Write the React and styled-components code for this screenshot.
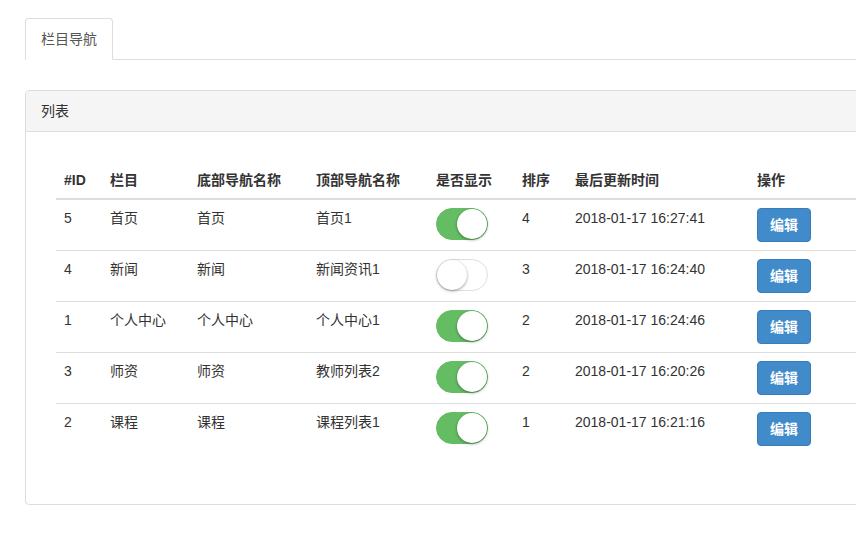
import React from "react";
import styled, { createGlobalStyle } from "styled-components";

const Global = createGlobalStyle`
  html, body { margin: 0; padding: 0; background: #fff; overflow: hidden; }
  body {
    font-family: "Liberation Sans", "Noto Sans CJK SC", sans-serif;
    font-size: 14px;
    line-height: 20px;
    color: #333;
  }
`;

const Page = styled.div`
  width: 960px;
  padding: 18px 0 0 25px;
  box-sizing: border-box;
`;

const Tabs = styled.ul`
  display: flex;
  list-style: none;
  margin: 0;
  padding: 0;
  border-bottom: 1px solid #ddd;
`;

const Tab = styled.li`
  margin-bottom: -1px;
  padding: 10px 15px;
  color: #555;
  background: #fff;
  border: 1px solid ${(p) => (p.$active ? "#ddd" : "transparent")};
  border-bottom-color: transparent;
  border-radius: 4px 4px 0 0;
`;

const Panel = styled.div`
  margin-top: 30px;
  border: 1px solid #ddd;
  border-radius: 4px;
  background: #fff;
`;

const PanelHeading = styled.div`
  padding: 10px 15px;
  background: #f5f5f5;
  border-bottom: 1px solid #ddd;
  border-radius: 3px 3px 0 0;
  color: #333;
`;

const PanelBody = styled.div`
  padding: 15px;
`;

const TableWrap = styled.div`
  padding: 15px;
`;

const Table = styled.table`
  width: 880px;
  table-layout: fixed;
  border-collapse: collapse;
  border-spacing: 0;
  margin-bottom: 20px;
`;

const Th = styled.th`
  text-align: left;
  font-weight: bold;
  padding: 8px;
  vertical-align: bottom;
  border-bottom: 2px solid #ddd;
  white-space: nowrap;
`;

const Tr = styled.tr`
  & + & > td { border-top: 1px solid #ddd; }
`;

const Td = styled.td`
  padding: 8px;
  vertical-align: top;
  white-space: nowrap;
`;

const Switch = styled.span`
  display: inline-block;
  position: relative;
  width: 50px;
  height: 30px;
  border-radius: 20px;
  border: 1px solid ${(p) => (p.$on ? "#64bd63" : "#dfdfdf")};
  background: ${(p) => (p.$on ? "#64bd63" : "#fff")};
  box-shadow: ${(p) => (p.$on ? "inset 0 0 0 16px #64bd63" : "inset 0 0 0 0 #dfdfdf")};
  vertical-align: top;
`;

const Knob = styled.small`
  position: absolute;
  top: 0;
  left: ${(p) => (p.$on ? "20px" : "0")};
  width: 30px;
  height: 30px;
  border-radius: 100%;
  background: #fff;
  box-shadow: 0 1px 3px rgba(0, 0, 0, 0.4);
`;

const Button = styled.button`
  font-family: inherit;
  font-size: 14px;
  line-height: 20px;
  font-weight: bold;
  color: #fff;
  background: #428bca;
  border: 1px solid #357ebd;
  border-radius: 4px;
  padding: 6px 12px;
  cursor: pointer;
`;

const cols = [46, 87, 119, 120, 86, 53, 182, 187];
const headers = ["#ID", "栏目", "底部导航名称", "顶部导航名称", "是否显示", "排序", "最后更新时间", "操作"];

const rows = [
  { id: 5, name: "首页", bottom: "首页", top: "首页1", on: true, sort: 4, time: "2018-01-17 16:27:41" },
  { id: 4, name: "新闻", bottom: "新闻", top: "新闻资讯1", on: false, sort: 3, time: "2018-01-17 16:24:40" },
  { id: 1, name: "个人中心", bottom: "个人中心", top: "个人中心1", on: true, sort: 2, time: "2018-01-17 16:24:46" },
  { id: 3, name: "师资", bottom: "师资", top: "教师列表2", on: true, sort: 2, time: "2018-01-17 16:20:26" },
  { id: 2, name: "课程", bottom: "课程", top: "课程列表1", on: true, sort: 1, time: "2018-01-17 16:21:16" },
];

export default function App() {
  return (
    <>
      <Global />
      <Page>
        <Tabs>
          <Tab $active>栏目导航</Tab>
        </Tabs>
        <Panel>
          <PanelHeading>列表</PanelHeading>
          <PanelBody>
            <TableWrap>
              <Table>
                <colgroup>
                  {cols.map((w, i) => (
                    <col key={i} style={{ width: w }} />
                  ))}
                </colgroup>
                <thead>
                  <tr>
                    {headers.map((h) => (
                      <Th key={h}>{h}</Th>
                    ))}
                  </tr>
                </thead>
                <tbody>
                  {rows.map((r) => (
                    <Tr key={r.id}>
                      <Td>{r.id}</Td>
                      <Td>{r.name}</Td>
                      <Td>{r.bottom}</Td>
                      <Td>{r.top}</Td>
                      <Td>
                        <Switch $on={r.on}>
                          <Knob $on={r.on} />
                        </Switch>
                      </Td>
                      <Td>{r.sort}</Td>
                      <Td>{r.time}</Td>
                      <Td>
                        <Button>编辑</Button>
                      </Td>
                    </Tr>
                  ))}
                </tbody>
              </Table>
            </TableWrap>
          </PanelBody>
        </Panel>
      </Page>
    </>
  );
}
